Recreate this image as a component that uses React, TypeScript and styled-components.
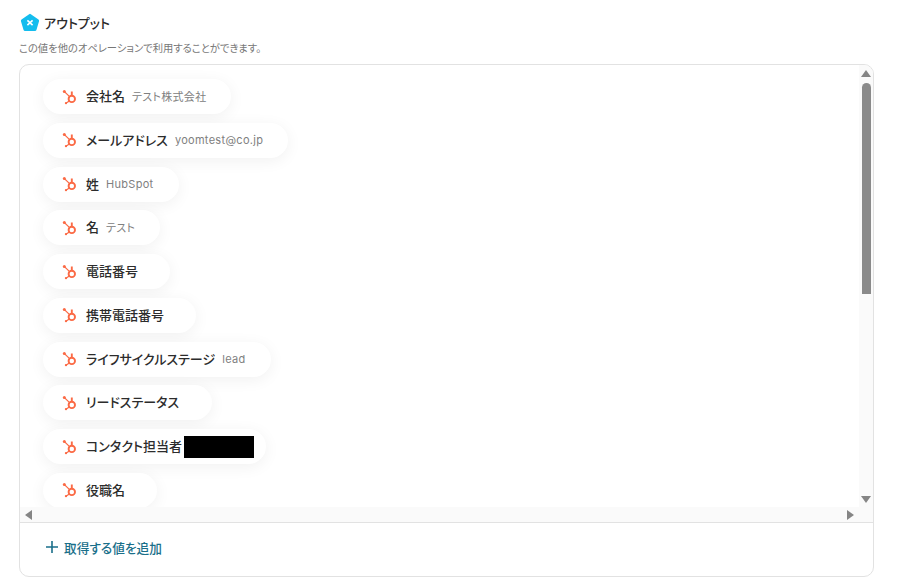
import styled, { createGlobalStyle } from 'styled-components';

const fields = [
  { label: '会社名', value: 'テスト株式会社', width: 188 },
  { label: 'メールアドレス', value: 'yoomtest@co.jp', width: 245 },
  { label: '姓', value: 'HubSpot', width: 136 },
  { label: '名', value: 'テスト', width: 117 },
  { label: '電話番号', width: 127 },
  { label: '携帯電話番号', width: 153 },
  { label: 'ライフサイクルステージ', value: 'lead', width: 228 },
  { label: 'リードステータス', width: 169 },
  { label: 'コンタクト担当者', masked: true, width: 223 },
  { label: '役職名', width: 114 },
];

const HubspotIcon = () => (
  <svg width="16" height="16" viewBox="0 0 16 16" fill="none" stroke="#fb6a45">
    <circle cx="9.8" cy="9.9" r="3.2" strokeWidth="1.9" />
    <path d="M9.8 7V2.5" strokeWidth="1.9" />
    <path d="M7.6 7.6 2.4 2.6M7.4 12 4.2 14" strokeWidth="1.3" />
    <circle cx="2.3" cy="2.5" r="1.5" fill="#fb6a45" stroke="none" />
    <circle cx="4" cy="14.1" r="1.2" fill="#fb6a45" stroke="none" />
  </svg>
);

const App = () => {
  return (
    <>
      <GlobalStyle />
      <Page>
        <TitleRow>
          <svg width="20" height="20" viewBox="0 0 20 20">
            <path
              d="M10 3.4 17.6 8.8 15 17.6 5 17.6 2.4 8.8Z"
              fill="#14bdee"
              stroke="#14bdee"
              strokeWidth="3"
              strokeLinejoin="round"
            />
            <path d="M7.4 8.4 12.6 13.2M12.6 8.4 7.4 13.2" stroke="#fff" strokeWidth="1.6" />
          </svg>
          <Title>アウトプット</Title>
        </TitleRow>
        <Description>この値を他のオペレーションで利用することができます。</Description>
        <Panel>
          <ScrollFrame>
            <ListArea>
              {fields.map((field) => (
                <Pill key={field.label} $width={field.width}>
                  <HubspotIcon />
                  <Label>{field.label}</Label>
                  {field.value && <Value>{field.value}</Value>}
                  {field.masked && <Mask />}
                </Pill>
              ))}
            </ListArea>
            <VerticalBar>
              <ArrowUp />
              <Thumb />
              <ArrowDown />
            </VerticalBar>
            <HorizontalBar>
              <ArrowLeft />
              <ArrowRight />
            </HorizontalBar>
            <Corner />
          </ScrollFrame>
          <Footer>
            <AddButton>
              <svg width="14" height="14" viewBox="0 0 14 14">
                <path d="M7 1v12M1 7h12" stroke="#1a6f8a" strokeWidth="1.6" />
              </svg>
              取得する値を追加
            </AddButton>
          </Footer>
        </Panel>
      </Page>
    </>
  );
};

export default App;

const GlobalStyle = createGlobalStyle`
  html, body {
    margin: 0;
    padding: 0;
    background: #fff;
    font-family: Inter, "Noto Sans CJK JP", sans-serif;
    font-feature-settings: "palt";
  }
`;

const Page = styled.div`
  width: 901px;
  height: 585px;
  box-sizing: border-box;
  padding: 12px 27px 0 19px;
  overflow: hidden;
`;

const TitleRow = styled.div`
  display: flex;
  align-items: center;
  gap: 4px;
  height: 20px;
  margin-left: 1px;
`;

const Title = styled.span`
  font-size: 13px;
  font-weight: 500;
  color: #2b2b2b;
`;

const Description = styled.p`
  margin: 9px 0 0;
  font-size: 10.3px;
  line-height: 14px;
  color: #777;
`;

const Panel = styled.div`
  box-sizing: border-box;
  height: 513px;
  margin-top: 9px;
  border: 1px solid #e2e2e2;
  border-radius: 10px;
  overflow: hidden;
  display: flex;
  flex-direction: column;
`;

const ScrollFrame = styled.div`
  height: 457px;
  display: grid;
  grid-template-columns: 1fr 14px;
  grid-template-rows: 1fr 15px;
  border-bottom: 1px solid #e2e2e2;
`;

const ListArea = styled.div`
  overflow: hidden;
  padding: 14px 0 0 23px;
  display: flex;
  flex-direction: column;
  gap: 8.75px;
`;

const Pill = styled.div<{ $width: number }>`
  flex: none;
  box-sizing: border-box;
  width: ${(p) => p.$width}px;
  height: 35px;
  padding-left: 19px;
  border-radius: 18px;
  background: #fff;
  box-shadow: 0 3px 16px rgba(0, 0, 0, 0.06);
  display: flex;
  align-items: center;
`;

const Label = styled.span`
  margin: 0 0 2px 8px;
  font-size: 13px;
  font-weight: 500;
  color: #2c2c2c;
  white-space: nowrap;
`;

const Value = styled.span`
  margin: 0 0 1px 7px;
  font-size: 11px;
  letter-spacing: 0.3px;
  color: #808080;
  white-space: nowrap;
`;

const Mask = styled.span`
  width: 70px;
  height: 22px;
  margin: 1px 0 0 2px;
  background: #000;
`;

const VerticalBar = styled.div`
  background: #fafafa;
  display: flex;
  flex-direction: column;
  align-items: center;
  padding-top: 5px;
`;

const Thumb = styled.div`
  width: 9px;
  height: 211px;
  margin-top: 6px;
  border-radius: 5px 5px 0 0;
  background: #8a8a8a;
`;

const ArrowUp = styled.div`
  width: 0;
  height: 0;
  border-left: 5px solid transparent;
  border-right: 5px solid transparent;
  border-bottom: 7px solid #858585;
`;

const ArrowDown = styled.div`
  width: 0;
  height: 0;
  margin-top: auto;
  margin-bottom: 4px;
  border-left: 5px solid transparent;
  border-right: 5px solid transparent;
  border-top: 7px solid #858585;
`;

const HorizontalBar = styled.div`
  background: #fafafa;
  display: flex;
  align-items: center;
  justify-content: space-between;
  padding: 0 5px;
`;

const ArrowLeft = styled.div`
  width: 0;
  height: 0;
  border-top: 5px solid transparent;
  border-bottom: 5px solid transparent;
  border-right: 7px solid #858585;
`;

const ArrowRight = styled.div`
  width: 0;
  height: 0;
  border-top: 5px solid transparent;
  border-bottom: 5px solid transparent;
  border-left: 7px solid #858585;
`;

const Corner = styled.div`
  background: #fafafa;
`;

const Footer = styled.div`
  flex: 1;
  display: flex;
  align-items: center;
  padding: 0 0 5px 25px;
`;

const AddButton = styled.div`
  display: flex;
  align-items: center;
  gap: 5px;
  font-size: 12.7px;
  font-weight: 500;
  color: #1a6f8a;
`;
